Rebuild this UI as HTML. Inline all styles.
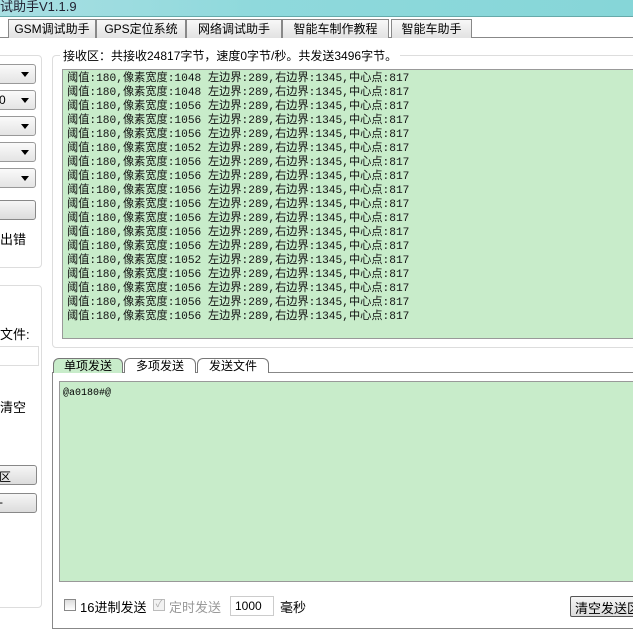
<!DOCTYPE html>
<html><head><meta charset="utf-8"><style>
*{margin:0;padding:0;box-sizing:border-box}
body{width:633px;height:630px;overflow:hidden;background:#fff;position:relative;font-family:"Liberation Sans","Noto Sans CJK SC","WenQuanYi Zen Hei",sans-serif;font-size:12px;color:#000}
.a{position:absolute;white-space:nowrap}
.title{left:0;top:0;width:633px;height:17px;background:linear-gradient(90deg,#a9dfe3,#8fd9dc 40%,#86d6d8);border-bottom:1px solid #6aa;}
.tab{top:19px;height:19px;background:linear-gradient(#f8f8f8,#e2e2e2);border:1px solid #888;border-bottom:none;font-size:12px;text-align:center;line-height:18px}
.combo{left:-4px;width:40px;height:20px;border:1px solid #999;border-radius:3px;background:linear-gradient(#fafafa,#e4e4e4)}
.combo:after{content:"";position:absolute;right:6px;top:7px;border-left:4px solid transparent;border-right:4px solid transparent;border-top:5px solid #000}
.btn{border:1px solid #888;border-radius:3px;background:linear-gradient(#f6f6f6,#dcdcdc)}
.grp{border:1px solid #ddd;border-radius:4px}
.rx{left:62px;top:69px;width:580px;height:270px;background:#c8ecca;border:1px solid #999;font-family:"Liberation Mono","Noto Sans CJK SC",monospace;font-size:11.2px;line-height:14px;padding:2px 0 0 4px;white-space:pre;color:#111}
.stab{top:358px;height:15px;border:1px solid #777;border-bottom:none;border-radius:6px 6px 0 0;font-size:12px;line-height:14px;text-align:center;background:#fff}
</style></head><body>
<div class="a title"></div>
<div class="a" style="left:0;top:-4px;font-size:13px;color:#223">试助手V1.1.9</div>
<div class="a" style="left:0;top:37px;width:633px;border-top:1px solid #888"></div>
<div class="a tab" style="left:8px;width:88px">GSM调试助手</div>
<div class="a tab" style="left:96px;width:90px">GPS定位系统</div>
<div class="a tab" style="left:186px;width:96px">网络调试助手</div>
<div class="a tab" style="left:282px;width:107px">智能车制作教程</div>
<div class="a tab" style="left:391px;width:81px">智能车助手</div>

<div class="a grp" style="left:-5px;top:55px;width:47px;height:213px"></div>
<div class="a combo" style="top:64px"></div>
<div class="a combo" style="top:90px"><span style="position:absolute;left:2px;top:2px">0</span></div>
<div class="a combo" style="top:116px"></div>
<div class="a combo" style="top:142px"></div>
<div class="a combo" style="top:168px"></div>
<div class="a btn" style="left:-4px;top:200px;width:40px;height:20px"></div>
<div class="a" style="left:0;top:229px;font-size:13px">出错</div>
<div class="a grp" style="left:-5px;top:285px;width:47px;height:323px"></div>
<div class="a" style="left:0;top:324px;font-size:13px">文件:</div>
<div class="a" style="left:-4px;top:346px;width:43px;height:20px;border:1px solid #ddd"></div>
<div class="a" style="left:0;top:397px;font-size:13px">清空</div>
<div class="a btn" style="left:-4px;top:465px;width:41px;height:20px"><span style="position:absolute;left:2px;top:2px">区</span></div>
<div class="a btn" style="left:-4px;top:493px;width:41px;height:20px"><span style="position:absolute;left:2px;top:1px">-</span></div>

<div class="a grp" style="left:52px;top:55px;width:600px;height:293px"></div>
<div class="a" style="left:60px;top:47px;background:#fff;padding:0 3px;font-size:12px">接收区：共接收24817字节，速度0字节/秒。共发送3496字节。</div>
<div class="a rx">阈值:180,像素宽度:1048 左边界:289,右边界:1345,中心点:817
阈值:180,像素宽度:1048 左边界:289,右边界:1345,中心点:817
阈值:180,像素宽度:1056 左边界:289,右边界:1345,中心点:817
阈值:180,像素宽度:1056 左边界:289,右边界:1345,中心点:817
阈值:180,像素宽度:1056 左边界:289,右边界:1345,中心点:817
阈值:180,像素宽度:1052 左边界:289,右边界:1345,中心点:817
阈值:180,像素宽度:1056 左边界:289,右边界:1345,中心点:817
阈值:180,像素宽度:1056 左边界:289,右边界:1345,中心点:817
阈值:180,像素宽度:1056 左边界:289,右边界:1345,中心点:817
阈值:180,像素宽度:1056 左边界:289,右边界:1345,中心点:817
阈值:180,像素宽度:1056 左边界:289,右边界:1345,中心点:817
阈值:180,像素宽度:1056 左边界:289,右边界:1345,中心点:817
阈值:180,像素宽度:1056 左边界:289,右边界:1345,中心点:817
阈值:180,像素宽度:1052 左边界:289,右边界:1345,中心点:817
阈值:180,像素宽度:1056 左边界:289,右边界:1345,中心点:817
阈值:180,像素宽度:1056 左边界:289,右边界:1345,中心点:817
阈值:180,像素宽度:1056 左边界:289,右边界:1345,中心点:817
阈值:180,像素宽度:1056 左边界:289,右边界:1345,中心点:817</div>

<div class="a" style="left:52px;top:372px;width:600px;height:257px;border:1px solid #888"></div>
<div class="a stab" style="left:53px;width:70px;background:#c8ecca">单项发送</div>
<div class="a stab" style="left:124px;width:72px">多项发送</div>
<div class="a stab" style="left:197px;width:72px">发送文件</div>
<div class="a" style="left:59px;top:381px;width:590px;height:201px;background:#c8ecca;border:1px solid #999;font-family:'Liberation Mono',monospace;font-size:10px;padding:6px 0 0 3px">@a0180#@</div>
<div class="a" style="left:64px;top:599px;width:12px;height:12px;border:1px solid #888;background:linear-gradient(#ddd,#fff)"></div>
<div class="a" style="left:80px;top:597px;font-size:13px">16进制发送</div>
<div class="a" style="left:153px;top:599px;width:12px;height:12px;border:1px solid #bbb;background:#f2f2f2;color:#aaa;font-size:10px;line-height:10px;text-align:center">✓</div>
<div class="a" style="left:169px;top:597px;font-size:13px;color:#999">定时发送</div>
<div class="a" style="left:230px;top:596px;width:44px;height:20px;border:1px solid #ccc;padding:2px 0 0 4px;font-size:12px">1000</div>
<div class="a" style="left:280px;top:597px;font-size:13px">毫秒</div>
<div class="a btn" style="left:570px;top:596px;width:70px;height:21px;border-radius:2px;padding:1px 0 0 4px;font-size:13px;border-color:#555;overflow:hidden">清空发送区</div>
</body></html>
